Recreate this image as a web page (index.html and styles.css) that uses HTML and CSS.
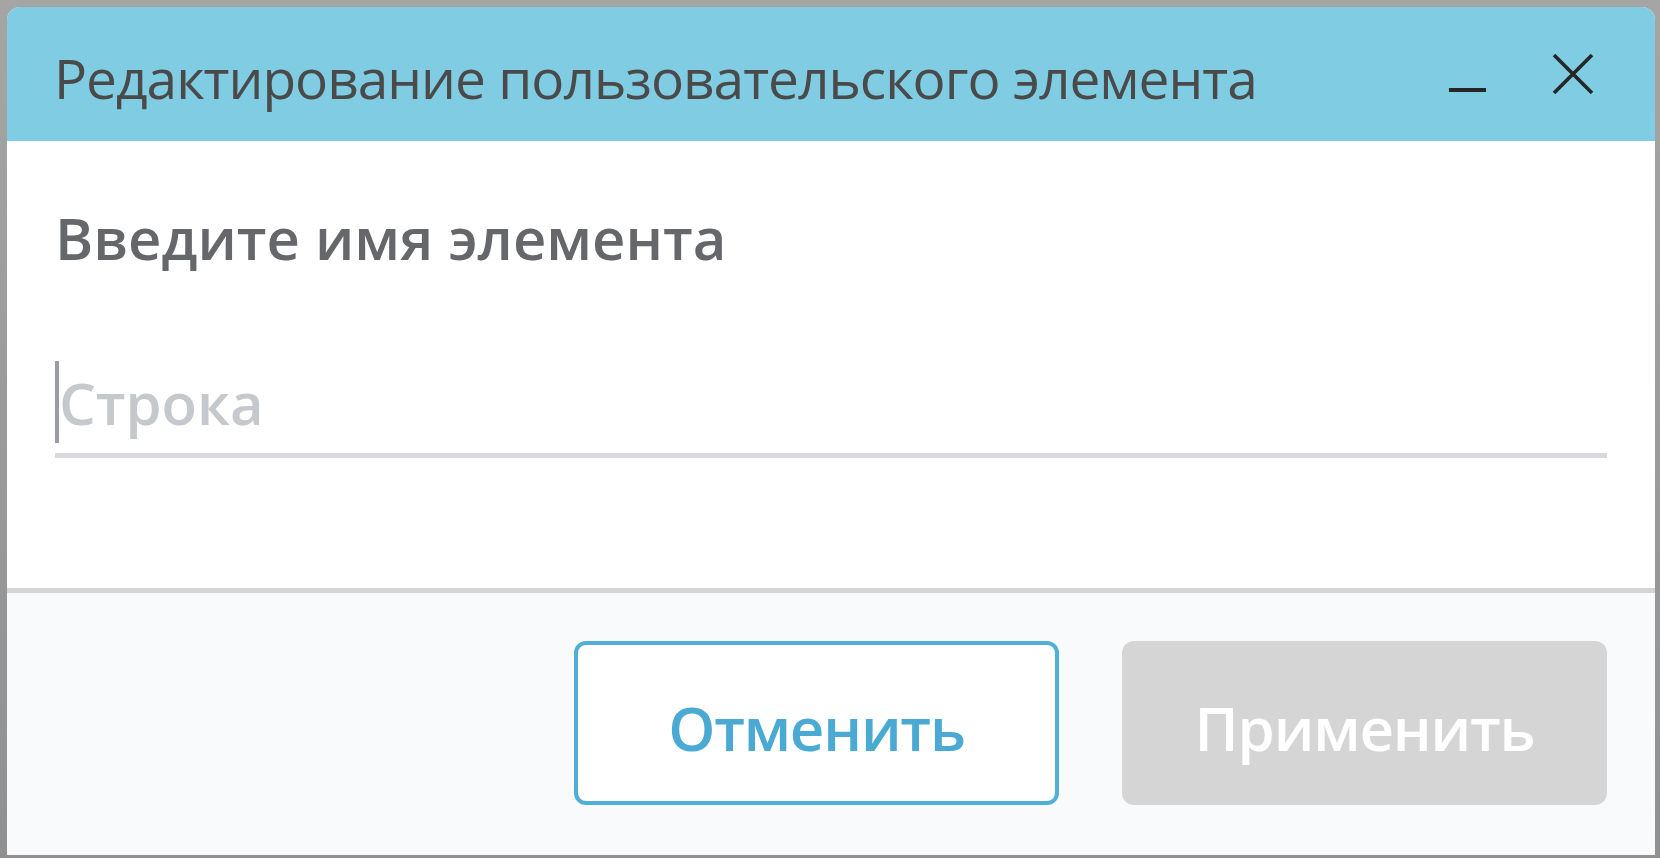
FILE: index.html
```html
<!DOCTYPE html>
<html lang="ru">
<head>
  <meta charset="UTF-8" />
  <meta name="viewport" content="width=device-width, initial-scale=1.0" />
  <title>Редактирование пользовательского элемента</title>
  <link rel="stylesheet" href="styles.css">
</head>
<body>
  <div class="dialog">
    <div class="dialog-header">
      <h1 class="dialog-title">Редактирование пользовательского элемента</h1>
      <div class="window-controls">
        <button class="ctrl-btn" title="Свернуть">
          <svg width="40" height="40" viewBox="0 0 40 40"><path d="M1 37.5H39" stroke="#262626" stroke-width="4"/></svg>
        </button>
        <button class="ctrl-btn" title="Закрыть">
          <svg width="42" height="42" viewBox="0 0 42 42"><path d="M2 2L40 40M40 2L2 40" stroke="#262626" stroke-width="3.6"/></svg>
        </button>
      </div>
    </div>

    <div class="dialog-body">
      <label class="field-label" for="itemName">Введите имя элемента</label>
      <div class="field">
        <span class="caret"></span>
        <input type="text" id="itemName" placeholder="Строка" />
      </div>
    </div>

    <div class="dialog-footer">
      <button class="btn btn-outline">Отменить</button>
      <button class="btn btn-disabled" disabled>Применить</button>
    </div>
  </div>
</body>
</html>
```

FILE: styles.css
```css
    html, body {
      height: 100%;
    }
    body {
      margin: 0;
      padding: 7px 5px 3px 7px;
      box-sizing: border-box;
      font-family: "Open Sans", "Noto Sans", sans-serif;
      background: linear-gradient(#a5a5a5, #909090);
    }
    .dialog {
      height: 848px;
      display: flex;
      flex-direction: column;
      background: #fff;
      border-radius: 13px 13px 0 0;
      overflow: hidden;
    }
    .dialog-header {
      height: 134px;
      flex: none;
      display: flex;
      align-items: center;
      padding: 0 48px 0 47px;
      background: #80cce3;
    }
    .dialog-title {
      flex: 1;
      margin: 0;
      font-size: 55px;
      font-weight: 400;
      line-height: 55px;
      letter-spacing: -1px;
      color: #4a4a4a;
      white-space: nowrap;
      position: relative;
      top: 3px;
    }
    .window-controls {
      display: flex;
      align-items: center;
      gap: 65px;
      margin-right: 13px;
    }
    .ctrl-btn {
      padding: 0;
      border: none;
      background: none;
      display: flex;
    }
    .ctrl-btn:first-child svg {
      width: 39px;
      position: relative;
      top: -1px;
    }
    .dialog-body {
      flex: 1;
      padding: 68px 48px 0 48px;
    }
    .field-label {
      display: block;
      font-size: 58px;
      line-height: 58px;
      font-weight: 600;
      color: #65676b;
    }
    .field {
      margin-top: 94px;
      display: flex;
      align-items: center;
      padding-bottom: 10px;
      border-bottom: 5px solid #d8d9dd;
    }
    .caret {
      width: 4px;
      height: 82px;
      background: #9a9da3;
      flex: none;
    }
    .field input {
      flex: 1;
      height: 82px;
      padding: 0;
      border: none;
      outline: none;
      background: transparent;
      font-family: inherit;
      font-size: 58px;
      font-weight: 600;
      color: #4a4a4a;
    }
    .field input::placeholder {
      color: #c5c8cc;
    }
    .dialog-footer {
      flex: none;
      height: 267px;
      box-sizing: border-box;
      border-top: 5px solid #d4d4d4;
      background: #f9fafc;
      display: flex;
      justify-content: flex-end;
      align-items: flex-start;
      gap: 63px;
      padding: 48px 48px 0 0;
    }
    .btn {
      width: 485px;
      height: 164px;
      box-sizing: border-box;
      padding-top: 10px;
      border-radius: 12px;
      font-family: inherit;
      font-size: 60px;
      font-weight: 600;
      letter-spacing: -1.2px;
      cursor: pointer;
    }
    .btn-outline {
      background: #fff;
      border: 4px solid #4fafd6;
      color: #4aaad3;
    }
    .btn-disabled {
      background: #d5d5d5;
      border: none;
      color: #fff;
      cursor: default;
    }
```
